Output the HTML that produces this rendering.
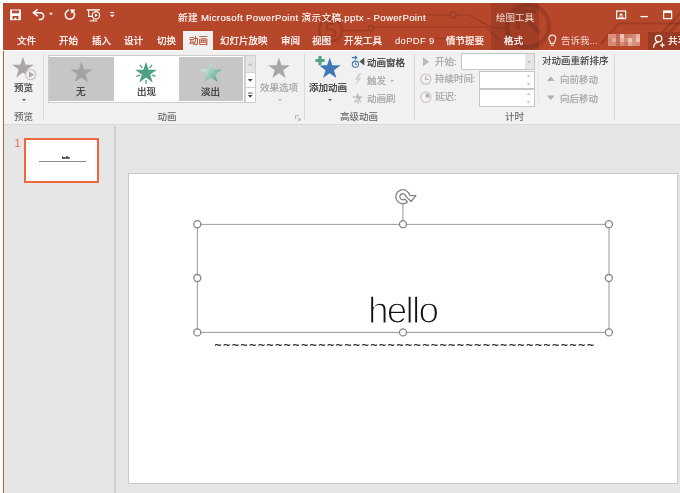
<!DOCTYPE html>
<html lang="zh-CN">
<head>
<meta charset="utf-8">
<title>新建 Microsoft PowerPoint 演示文稿.pptx - PowerPoint</title>
<style>
html,body{margin:0;padding:0;}
body{width:680px;height:493px;overflow:hidden;background:#fff;position:relative;
  font-family:"Liberation Sans","Noto Sans CJK SC",sans-serif;font-size:9.5px;color:#333;}
.abs{position:absolute;}
#win{will-change:transform;position:absolute;left:3px;top:3px;width:677px;height:490px;background:#e6e6e6;overflow:hidden;}
#title{position:absolute;left:0;top:0;width:677px;height:47px;background:#b7472a;z-index:2;border-bottom:1.3px solid #f8fdfd;}
#ribbon{position:absolute;left:0;top:46px;width:677px;height:75px;background:#f1f1f1;border-bottom:1px solid #dadada;}
#leftedge{position:absolute;left:0;top:46px;width:1px;height:444px;background:#c8553a;}
.t{position:absolute;white-space:nowrap;line-height:12px;-webkit-text-stroke:0.22px currentColor;}
.w{color:#fff;}
.tab{top:31.5px;font-size:9.5px;}
.g{color:#a6a6a6;}
.gl{top:62px;color:#5e5e5e;-webkit-text-stroke:0.05px currentColor;}
.arr{position:absolute;width:0;height:0;border-style:solid;border-width:2.6px 2.4px 0 2.4px;border-color:#555 transparent transparent transparent;}
.box{background:#fff;border:1px solid #c6c6c6;box-sizing:border-box;}
.sep{position:absolute;width:1px;background:#dadada;}
</style>
</head>
<body>
<div id="win">
  <div id="title">
<!--TS-->
    <!-- contextual tab header -->
    <div class="abs" style="left:488px;top:0;width:48px;height:47px;background:#a33e26;"></div>
    <!-- circuit watermark -->
    <svg class="abs" style="left:0;top:0" width="677" height="46" viewBox="3 3 677 46" fill="none" stroke="#000" stroke-opacity="0.13" stroke-width="1.5">
      <path d="M425 15 H450 M456 15 H469 L492 28 H506 M342.5 30.5 H368 M373.6 27 H486 L500 40 M434 38.5 H446"/>
      <circle cx="453" cy="15" r="3"/>
      <circle cx="371" cy="28" r="2.6"/>
      <circle cx="330.6" cy="30" r="11.4" stroke-width="2.6"/>
      <path d="M335 24 H327 V29.5 H332 A3.4 3.4 0 0 1 332 36.4 H326" stroke-width="2.2"/>
      <circle cx="528" cy="26" r="21" stroke-width="4.5"/>
      <path d="M518 11 L540 33 M518 11 H536 M518 11 V29" stroke-width="4"/>
      <path d="M600.6 44 L619 23.5 H680" stroke-width="2"/><path d="M661 34 L680 13 M668 34 L680 21" stroke-width="2.6"/>
    </svg>
    <div class="abs" style="left:644.7px;top:29px;width:33px;height:18px;background:#9a3a22;"></div>
    <!-- QAT icons -->
    <svg class="abs" style="left:0;top:0" width="130" height="30" viewBox="3 3 130 30" fill="none" stroke="#fff" stroke-width="1.4">
      <!-- save -->
      <path d="M10.1 9.5 H20.9 V20.2 H10.1 Z" fill="#fff" stroke="none"/>
      <path d="M12 10.4 H19 V13.3 H12 Z M12.5 16.1 H18.5 V19.2 H16.4 V17.8 H14.4 V19.2 H12.5 Z" fill="#b7472a" stroke="none"/>
      <!-- undo -->
      <path d="M33.4 12.7 H40.3 A3.4 3.4 0 0 1 40.3 19.5 H38.8" stroke-width="1.5"/>
      <path d="M37.6 9.4 L33.4 12.7 L37.6 16.2" stroke-width="1.5"/>
      <path d="M49 12.8 H52.8 L50.9 15.3 Z" fill="#fff" stroke="none"/>
      <!-- redo -->
      <path d="M69 10.1 A4.6 4.6 0 1 0 73.6 11.9" stroke-width="1.5"/>
      <path d="M70.3 9.4 H75 V10.4 L71.7 13.8 Z" fill="#fff" stroke="none"/>
      <!-- slideshow -->
      <path d="M86.8 9.9 H100" stroke-width="1.4"/>
      <path d="M88.6 10 V16.4 H92" stroke-width="1.2"/>
      <circle cx="96" cy="15.3" r="3.7" stroke-width="1.1"/>
      <path d="M95 13.6 L97.8 15.3 L95 17 Z" fill="#fff" stroke="none"/>
      <path d="M89.5 20.9 H97.2 M93.3 19 V20.9" stroke-width="1"/>
      <!-- customize -->
      <path d="M110 12.6 H114.2" stroke-width="1"/>
      <path d="M110 14.8 H114.4 L112.2 17.2 Z" fill="#fff" stroke="none"/>
    </svg>
    <!-- window title -->
    <div class="t w" id="wtitle" style="left:175px;top:9px;font-size:9.6px;letter-spacing:0.35px;-webkit-text-stroke:0.1px #fff;">新建 Microsoft PowerPoint 演示文稿.pptx - PowerPoint</div>
    <div class="t" id="ctxt" style="left:493px;top:9px;font-size:9.5px;color:#f3ddd6;-webkit-text-stroke:0;">绘图工具</div>
    <!-- window buttons -->
    <svg class="abs" style="left:600px;top:0" width="77" height="30" viewBox="603 3 77 30" fill="none" stroke="#fff" stroke-width="1.2">
      <rect x="616.6" y="11" width="9" height="7.6"/>
      <path d="M618.5 17.2 H623.7" stroke-width="1"/>
      <path d="M619 15.6 L621.1 13 L623.2 15.6 Z" fill="#fff" stroke="none"/>
      <path d="M640.5 16.6 H648" stroke-width="1.3"/>
      <rect x="663.6" y="11" width="8" height="7.6"/>
      <path d="M663.6 12 H671.6" stroke-width="2"/>
    </svg>
    <!-- tabs -->
    <div class="abs" style="left:180.2px;top:28.3px;width:30.3px;height:20.2px;background:#f1f1f1;"></div>
    <div class="t w tab" style="left:14px;">文件</div>
    <div class="t w tab" style="left:56px;">开始</div>
    <div class="t w tab" style="left:89px;">插入</div>
    <div class="t w tab" style="left:121px;">设计</div>
    <div class="t w tab" style="left:154px;">切换</div>
    <div class="t tab" style="left:186px;color:#b7472a;">动画</div>
    <div class="t w tab" style="left:217px;">幻灯片放映</div>
    <div class="t w tab" style="left:278px;">审阅</div>
    <div class="t w tab" style="left:309px;">视图</div>
    <div class="t w tab" style="left:341px;">开发工具</div>
    <div class="t w tab" style="left:392px;letter-spacing:0.3px;-webkit-text-stroke:0;">doPDF 9</div>
    <div class="t w tab" style="left:443px;">情节提要</div>
    <div class="t w tab" style="left:501px;">格式</div>
    <div class="t tab" style="left:558px;color:#f3d9d1;-webkit-text-stroke:0;">告诉我...</div>
    <div class="t w tab" style="left:665px;">共享</div>
    <!-- lightbulb -->
    <svg class="abs" style="left:543px;top:30px" width="14" height="16" viewBox="546 33 14 16" fill="none" stroke="#f7e3dc" stroke-width="1.15">
      <path d="M550.6 43.4 C550.6 41.6 548.9 41 548.9 38.6 A3.4 3.4 0 0 1 555.7 38.6 C555.7 41 554 41.6 554 43.4 Z"/>
      <path d="M550.8 45.2 H553.8"/>
    </svg>
    <!-- blurred user name -->
    <svg class="abs" style="left:605px;top:31px;filter:blur(.5px)" width="32" height="12" viewBox="0 0 32 12"><rect x="0" y="0" width="4" height="4" fill="#d9917b"/><rect x="0" y="4" width="4" height="4" fill="#d48a73"/><rect x="0" y="8" width="4" height="4" fill="#d48a73"/><rect x="4" y="0" width="4" height="4" fill="#d9917b"/><rect x="4" y="4" width="4" height="4" fill="#e2a896"/><rect x="4" y="8" width="4" height="4" fill="#d48a73"/><rect x="8" y="0" width="4" height="4" fill="#c26a50"/><rect x="8" y="4" width="4" height="4" fill="#c26a50"/><rect x="8" y="8" width="4" height="4" fill="#c26a50"/><rect x="12" y="0" width="4" height="4" fill="#ecc2b5"/><rect x="12" y="4" width="4" height="4" fill="#e6b3a3"/><rect x="12" y="8" width="4" height="4" fill="#d48a73"/><rect x="16" y="0" width="4" height="4" fill="#c9785f"/><rect x="16" y="4" width="4" height="4" fill="#d48a73"/><rect x="16" y="8" width="4" height="4" fill="#c9785f"/><rect x="20" y="0" width="4" height="4" fill="#cf8068"/><rect x="20" y="4" width="4" height="4" fill="#ecc2b5"/><rect x="20" y="8" width="4" height="4" fill="#e2a896"/><rect x="24" y="0" width="4" height="4" fill="#d48a73"/><rect x="24" y="4" width="4" height="4" fill="#d9917b"/><rect x="24" y="8" width="4" height="4" fill="#d9917b"/><rect x="28" y="0" width="4" height="4" fill="#e6b3a3"/><rect x="28" y="4" width="4" height="4" fill="#ecc2b5"/><rect x="28" y="8" width="4" height="4" fill="#d48a73"/></svg>
    <!-- share icon -->
    <svg class="abs" style="left:647px;top:30px" width="18" height="18" viewBox="650 33 18 18" fill="none" stroke="#fff" stroke-width="1.3">
      <circle cx="658.6" cy="38.6" r="3.2"/>
      <path d="M653.6 47.6 C653.8 44 656 42.4 658.4 42.4"/>
      <path d="M660.1 45.1 H664.7 M662.4 42.8 V47.4" stroke-width="1.2"/>
    </svg>
<!--TE-->
  </div>
  <div id="ribbon">
<!--RS-->
    <!-- coordinates inside ribbon: x = target-3, y = target-49 -->
    <!-- preview button -->
    <svg class="abs" style="left:6px;top:5px" width="32" height="30" viewBox="9 54 32 30">
      <path d="M0.0 -11.4 L2.6 -3.5 L10.9 -3.5 L4.2 1.4 L6.7 9.3 L0.0 4.4 L-6.7 9.3 L-4.2 1.4 L-10.9 -3.5 L-2.6 -3.5 Z" transform="translate(22.9 68.2)" fill="#a8a6a8"/>
      <circle cx="30.7" cy="74.6" r="5.1" fill="#f4eff2" stroke="#cbc2c7" stroke-width="1.2"/>
      <path d="M29 71.6 L34.2 74.7 L29 77.8 Z" fill="#ababab"/>
    </svg>
    <div class="t" style="left:11px;top:33px;color:#444;">预览</div>
    <div class="arr" style="left:19.2px;top:49.7px;"></div>
    <div class="t gl" style="left:11px;">预览</div>
    <div class="sep" style="left:40px;top:5px;height:66px;"></div>
    <!-- gallery -->
    <div class="abs" style="left:45px;top:6px;width:197px;height:48px;border:1px solid #cdcdcd;background:#fff;box-sizing:border-box;"></div>
    <div class="abs" style="left:46px;top:8px;width:65px;height:44px;background:#c6c6c6;"></div>
    <div class="abs" style="left:176px;top:8px;width:64px;height:44px;background:#c6c6c6;"></div>
    <div class="abs" style="left:242px;top:6px;width:10.5px;height:18px;background:#e4e4e4;border:1px solid #d0d0d0;box-sizing:border-box;"></div>
    <div class="abs" style="left:242px;top:24px;width:10.5px;height:15px;background:#fff;border:1px solid #d0d0d0;border-top:none;box-sizing:border-box;"></div>
    <div class="abs" style="left:242px;top:39px;width:10.5px;height:15px;background:#fff;border:1px solid #d0d0d0;border-top:none;box-sizing:border-box;"></div>
    <svg class="abs" style="left:241.8px;top:6.5px" width="10.5" height="46.5" viewBox="244.8 55.5 10.5 46.5">
      <path d="M247.8 65 L250 62.6 L252.2 65 Z" fill="#b8b8b8"/>
      <path d="M247.6 78.6 H252.4 L250 81.2 Z" fill="#444"/>
      <path d="M247.6 92.6 H252.4" stroke="#444" stroke-width=".9"/>
      <path d="M247.6 94.6 H252.4 L250 97.2 Z" fill="#444"/>
    </svg>
    <svg class="abs" style="left:46px;top:7px" width="195" height="32" viewBox="49 56 195 32">
      <defs><linearGradient id="fade" x1="0" y1="0.1" x2="1" y2="0.8"><stop offset="0.1" stop-color="#e4f1ec"/><stop offset="1" stop-color="#4e9f84"/></linearGradient></defs>
      <path d="M0.0 -11.4 L2.6 -3.5 L10.9 -3.5 L4.2 1.4 L6.7 9.3 L0.0 4.4 L-6.7 9.3 L-4.2 1.4 L-10.9 -3.5 L-2.6 -3.5 Z" transform="translate(81.4 73)" fill="#a3a3a3"/>
      <g transform="translate(146 73.2)">
        <path d="M0.0 -11.4 L2.6 -3.5 L10.9 -3.5 L4.2 1.4 L6.7 9.3 L0.0 4.4 L-6.7 9.3 L-4.2 1.4 L-10.9 -3.5 L-2.6 -3.5 Z" fill="#4e9f84"/>
        <path d="M3.6 -5.0 L6.0 -8.3 M5.9 1.9 L9.7 3.2 M0.0 6.6 L0.0 10.6 M-5.9 1.9 L-9.7 3.2 M-3.6 -5.0 L-6.0 -8.3" stroke="#4e9f84" stroke-width="1.3" fill="none"/>
      </g>
      <path d="M0.0 -11.4 L2.6 -3.5 L10.9 -3.5 L4.2 1.4 L6.7 9.3 L0.0 4.4 L-6.7 9.3 L-4.2 1.4 L-10.9 -3.5 L-2.6 -3.5 Z" transform="translate(211 73)" fill="url(#fade)"/>
    </svg>
    <div class="t" style="left:73px;top:37px;color:#333;">无</div>
    <div class="t" style="left:134px;top:37px;color:#333;">出现</div>
    <div class="t" style="left:198px;top:37px;color:#333;">淡出</div>
    <!-- effect options -->
    <svg class="abs" style="left:262px;top:6px" width="28" height="24" viewBox="265 55 28 24">
      <path d="M0.0 -11.4 L2.6 -3.5 L10.9 -3.5 L4.2 1.4 L6.7 9.3 L0.0 4.4 L-6.7 9.3 L-4.2 1.4 L-10.9 -3.5 L-2.6 -3.5 Z" transform="translate(279 68.8)" fill="#a8a6a8"/>
    </svg>
    <div class="t g" style="left:257px;top:33px;">效果选项</div>
    <div class="arr" style="left:274.5px;top:49.5px;border-top-color:#b5b5b5;"></div>
    <div class="t gl" style="left:154.5px;">动画</div>
    <svg class="abs" style="left:291.6px;top:66.2px" width="6" height="6" viewBox="0 0 6 6" fill="none" stroke="#a8a8a8" stroke-width=".8"><path d="M.5 4 V.5 H4 M2.4 2.4 L5.2 5.2 M5.3 3 V5.3 H3"/></svg>
    <div class="sep" style="left:301px;top:5px;height:66px;"></div>
    <!-- add animation -->
    <svg class="abs" style="left:308px;top:4px" width="32" height="26" viewBox="311 53 32 26">
      <path d="M0.0 -11.4 L2.6 -3.5 L10.9 -3.5 L4.2 1.4 L6.7 9.3 L0.0 4.4 L-6.7 9.3 L-4.2 1.4 L-10.9 -3.5 L-2.6 -3.5 Z" transform="translate(329.7 68.8)" fill="#3f78b8"/>
      <path d="M320 55.6 V65.4 M315 60.5 H325" stroke="#f1f1f1" stroke-width="5"/>
      <path d="M320 56 V65 M315.4 60.5 H324.6" stroke="#55a286" stroke-width="3.1"/>
    </svg>
    <div class="t" style="left:306px;top:33px;color:#333;">添加动画</div>
    <div class="arr" style="left:325px;top:49.5px;"></div>
    <!-- animation pane etc -->
    <div class="t" style="left:364px;top:7.5px;color:#333;">动画窗格</div>
    <div class="t g" style="left:364px;top:25.5px;">触发</div>
    <div class="arr" style="left:386.5px;top:31px;border-top-color:#b5b5b5;"></div>
    <div class="t g" style="left:364px;top:43.5px;">动画刷</div>
    <svg class="abs" style="left:346px;top:4px" width="18" height="54" viewBox="349 53 18 54" fill="none">
      <!-- pane icon -->
      <circle cx="355.4" cy="64.2" r="3.1" stroke="#3f78b8" stroke-width="1.1"/>
      <path d="M355.4 62.4 V64.4 H357" stroke="#3f78b8" stroke-width=".9"/>
      <path d="M351.8 57.6 H356.4 M354.8 55.8 L356.8 57.6 L354.8 59.4" stroke="#3f78b8" stroke-width="1.1"/>
      <path d="M364.4 57.4 V65.6 L359.4 61.5 Z" fill="#555"/>
      <!-- trigger -->
      <path d="M358 73.6 L355 80 H357.6 L355.4 85 L361.4 77.8 H358.6 L361.4 73.6 Z" fill="#d6d0d3"/>
      <!-- painter -->
      <path d="M0 -5.6 L1.5 -1.9 L5.6 -1.7 L2.4 0.8 L3.5 4.8 L0 2.5 L-3.5 4.8 L-2.4 0.8 L-5.6 -1.7 L-1.5 -1.9 Z" transform="translate(357.6 98.2)" fill="#bdbdbd"/>
      <path d="M354.6 97.6 L359.6 102.4" stroke="#f1f1f1" stroke-width="1.5"/>
      <path d="M356.6 100.2 L359 103.4" stroke="#c8c0c4" stroke-width="1.6"/>
    </svg>
    <div class="t gl" style="left:337px;">高级动画</div>
    <div class="sep" style="left:410.5px;top:5px;height:66px;"></div>
    <!-- timing -->
    <svg class="abs" style="left:414px;top:4px" width="18" height="54" viewBox="417 53 18 54" fill="#f6f2f4" stroke="#cbc3c7" stroke-width="1.2">
      <path d="M423 57.3 L429.2 61.8 L423 66.3 Z" fill="#b8b8b8" stroke="none"/>
      <circle cx="425.8" cy="79.1" r="5.1"/><path d="M425.8 75.8 V79.4 H428.6" fill="none" stroke="#b9b1b5"/>
      <circle cx="425.8" cy="97.3" r="5.1"/><path d="M425.8 93.6 V97.5 H429.6 A3.8 3.8 0 0 0 425.8 93.6 Z" fill="#aaa" stroke="none"/>
    </svg>
    <div class="t g" style="left:432px;top:6.8px;">开始:</div>
    <div class="t g" style="left:432px;top:24.4px;">持续时间:</div>
    <div class="t g" style="left:432px;top:42.4px;">延迟:</div>
    <div class="abs box" style="left:458px;top:4px;width:74px;height:17.3px;"></div>
    <div class="abs" style="left:521.5px;top:5px;width:9.5px;height:15.3px;background:#e6e6e6;"></div>
    <div class="arr" style="left:523.5px;top:11.8px;border-top-color:#b5b5b5;border-width:2.5px 2.3px 0 2.3px;"></div>
    <div class="abs box" style="left:476.4px;top:22.2px;width:55.6px;height:17.6px;"></div>
    <div class="abs box" style="left:476.4px;top:40.4px;width:55.6px;height:17.6px;"></div>
    <svg class="abs" style="left:520px;top:22px" width="10" height="36" viewBox="0 0 10 36" fill="#c6c6c6">
      <path d="M3.6 5.8 L5.6 3.4 L7.6 5.8 Z M3.6 12 L5.6 14.4 L7.6 12 Z M3.6 24 L5.6 21.6 L7.6 24 Z M3.6 30.2 L5.6 32.6 L7.6 30.2 Z"/>
    </svg>
    <div class="abs" style="left:535px;top:9.6px;width:1.2px;height:43px;background:#e4e4e4;"></div>
    <div class="t gl" style="left:502px;">计时</div>
    <!-- reorder -->
    <div class="t" style="left:539px;top:5.5px;color:#3a3a3a;-webkit-text-stroke:0.1px currentColor;">对动画重新排序</div>
    <svg class="abs" style="left:542px;top:24px" width="12" height="32" viewBox="0 0 12 32"><path d="M2 8 L5.8 3.4 L9.6 8 Z M2 22.6 L5.8 27.2 L9.6 22.6 Z" fill="#b0b0b0"/></svg>
    <div class="t g" style="left:557px;top:25px;">向前移动</div>
    <div class="t g" style="left:557px;top:43.5px;">向后移动</div>
    <div class="sep" style="left:610.5px;top:5px;height:66px;"></div>
<!--RE-->
  </div>
  <div id="leftedge"></div>
<!--WS-->
  <!-- workspace: win coords = target-3 -->
  <div class="abs" style="left:111px;top:123px;width:1.6px;height:370px;background:#cfcfcf;"></div>
  <div class="t" style="left:11.5px;top:133.5px;font-size:11px;color:#ea6a44;-webkit-text-stroke:0;">1</div>
  <div class="abs" style="left:21px;top:135px;width:75px;height:45px;box-sizing:border-box;border:2px solid #f0673f;background:#fff;"></div>
  <div class="t" style="left:59px;top:152.5px;font-size:3.4px;line-height:4px;color:#222;font-weight:bold;">hello</div>
  <div class="abs" style="left:36px;top:158.2px;width:47px;height:0;border-top:0.6px solid #8a8a8a;"></div>
  <!-- slide -->
  <div class="abs" id="slide" style="left:125px;top:170px;width:550px;height:310.7px;box-sizing:border-box;border:1px solid #c9c9c9;background:#fff;"></div>
  <div class="t" id="hello" style="left:364.9px;top:287.6px;font-size:37px;line-height:40px;color:#111;letter-spacing:-1.75px;-webkit-text-stroke:1.25px #fff;">hello</div>
  <div class="t" id="tildes" style="left:211.6px;top:332.9px;font-size:12px;line-height:18px;color:#222;letter-spacing:1.65px;">~~~~~~~~~~~~~~~~~~~~~~~~~~~~~~~~~~~~~~~~~~~~</div>
  <svg class="abs" style="left:185px;top:180px" width="430" height="160" viewBox="188 183 430 160" fill="none" stroke="#a2a2a2" stroke-width="1.1">
    <rect x="197.4" y="224.4" width="411.6" height="108"/>
    <path d="M402.9 224 V203.8"/>
    <g fill="#fff" stroke="#868686" stroke-width="1.3">
      <circle cx="197.3" cy="224.2" r="3.5"/><circle cx="403" cy="224.2" r="3.5"/><circle cx="608.9" cy="224.2" r="3.5"/>
      <circle cx="197.3" cy="278" r="3.5"/><circle cx="608.9" cy="278" r="3.5"/>
      <circle cx="197.3" cy="332.4" r="3.5"/><circle cx="403" cy="332.4" r="3.5"/><circle cx="608.9" cy="332.4" r="3.5"/>
    </g>
    <!-- rotate handle -->
    <g stroke="#858585" stroke-width="1.35" stroke-linejoin="round">
      <path d="M407.48 201.90 A7.0 7.0 0 1 1 409.73 195.73"/>
      <path d="M404.81 198.93 A3.0 3.0 0 1 1 405.79 196.96"/>
      <path d="M407.48 201.90 L404.81 198.93"/>
      <path d="M409.6 195.6 H416 L411 201.5 L406 196.4"/>
    </g>
  </svg>
<!--WE-->
</div>
</body>
</html>
